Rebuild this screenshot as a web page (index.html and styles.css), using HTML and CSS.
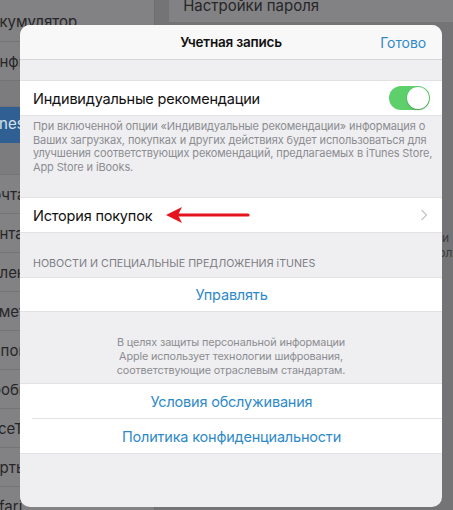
FILE: index.html
```html
<!DOCTYPE html>
<html lang="ru">
<head>
    <meta charset="UTF-8">
    <meta name="viewport" content="width=device-width, initial-scale=1.0">
    <title>Учетная запись</title>
    <link rel="stylesheet" href="styles.css">
</head>
<body>
    <!-- настройки под затемнением -->
    <div class="settings">
        <div class="master">
            <div class="m-row first">Аккумулятор</div>
            <div class="m-row">Конфиденциальность</div>
            <div class="m-gap"></div>
            <div class="m-row selected">iTunes Store и App Store</div>
            <div class="m-gap small"></div>
            <div class="m-row">Почта</div>
            <div class="m-row">Контакты</div>
            <div class="m-row">Календарь</div>
            <div class="m-row">Заметки</div>
            <div class="m-row">Напоминания</div>
            <div class="m-row">Сообщения</div>
            <div class="m-row">FaceTime</div>
            <div class="m-row">Карты</div>
            <div class="m-row">Safari</div>
        </div>
        <div class="detail">
            <div class="d-cell">Настройки пароля</div>
            <div class="d-note">(если<br>пароль</div>
        </div>
    </div>

    <div class="modal">
        <div class="nav">
            <span></span>
            <div class="nav-title">Учетная запись</div>
            <div class="nav-done">Готово</div>
        </div>

        <div class="group top">
            <div class="cell">
                <span>Индивидуальные рекомендации</span>
                <div class="switch"><div class="knob"></div></div>
            </div>
        </div>
        <p class="note">При включенной опции «Индивидуальные рекомендации» информация о<br>Ваших загрузках, покупках и других действиях будет использоваться для<br>улучшения соответствующих рекомендаций, предлагаемых в iTunes Store,<br>App Store и iBooks.</p>

        <div class="group">
            <div class="cell">
                <span>История покупок</span>
                <svg class="arrow" width="90" height="22" viewBox="0 0 90 22">
                    <path d="M84 11 L14 11" stroke="#e3141c" stroke-width="3.2" stroke-linecap="round"/>
                    <path d="M2 11 L18 3 L14 11 L18 19 Z" fill="#e3141c"/>
                </svg>
                <svg class="chevron" width="8" height="12" viewBox="0 0 8 12">
                    <path d="M1.5 1 L6.5 6 L1.5 11" fill="none" stroke="#c7c7cc" stroke-width="1.3"/>
                </svg>
            </div>
        </div>

        <div class="section-title">НОВОСТИ И СПЕЦИАЛЬНЫЕ ПРЕДЛОЖЕНИЯ iTUNES</div>
        <div class="group">
            <div class="cell link">Управлять</div>
        </div>

        <p class="note center">В целях защиты персональной информации<br>Apple использует технологии шифрования,<br>соответствующие отраслевым стандартам.</p>

        <div class="group legal">
            <div class="cell link">Условия обслуживания</div>
            <div class="cell link">Политика конфиденциальности</div>
        </div>
    </div>
</body>
</html>
```

FILE: styles.css
```css
* {
    margin: 0;
    padding: 0;
    box-sizing: border-box;
}

body {
    width: 453px;
    height: 510px;
    overflow: hidden;
    position: relative;
    font-family: Inter, "Noto Sans", sans-serif;
    background: #747476;
}

/* фон: экран настроек */
.settings {
    display: flex;
    height: 100%;
}

.master {
    width: 182px;
    background: #828284;
    border-right: 1px solid #6e6e70;
}

.m-row {
    height: 39px;
    line-height: 39px;
    font-size: 15px;
    color: #262628;
    white-space: nowrap;
    text-indent: -19px;
    border-bottom: 1px solid #747476;
}

.m-row.first {
    height: 42px;
    line-height: 44px;
}

.m-row.selected {
    background: #2f5f93;
    color: #d6e2ee;
    height: 36px;
    line-height: 34px;
    text-indent: -22px;
    border: none;
}

.m-gap {
    height: 26px;
    background: #7c7c7e;
    border-bottom: 1px solid #747476;
}

.m-gap.small {
    height: 32px;
}

.detail {
    flex: 1;
    padding: 0 0 0 14px;
}

.d-cell {
    height: 22px;
    background: #828284;
    padding-left: 14px;
    font-size: 15px;
    line-height: 12px;
    color: #262628;
}

.d-note {
    margin-top: 208px;
    padding-left: 248px;
    font-size: 12px;
    line-height: 15px;
    color: #3a3a3c;
    white-space: nowrap;
}

/* окно учетной записи */
.modal {
    position: absolute;
    left: 20px;
    top: 25px;
    width: 422px;
    height: 482px;
    border-radius: 10px;
    overflow: hidden;
    background: #efeff2;
    display: flex;
    flex-direction: column;
}

.nav {
    height: 35px;
    flex-shrink: 0;
    background: #f8f8f8;
    border-bottom: 1px solid #d6d6d8;
    display: grid;
    grid-template-columns: 1fr auto 1fr;
    align-items: center;
    padding: 0 16px;
}

.nav-title {
    font-size: 13.5px;
    font-weight: 600;
    letter-spacing: -0.2px;
    color: #111;
}

.nav-done {
    justify-self: end;
    font-size: 14px;
    letter-spacing: -0.1px;
    color: #2f8ac8;
}

.group {
    background: #fff;
    border-top: 1px solid #e2e2e4;
    border-bottom: 1px solid #e2e2e4;
}

.group.top {
    margin-top: 20px;
}

.cell {
    height: 34px;
    display: flex;
    align-items: center;
    padding: 0 12px 0 13px;
    font-size: 14.5px;
    letter-spacing: -0.2px;
    color: #111;
    position: relative;
}

.cell + .cell::before {
    content: "";
    position: absolute;
    left: 12px;
    right: 0;
    top: -1px;
    border-top: 1px solid #e2e2e4;
}

.cell + .cell {
    margin-top: 1px;
}

.cell.link {
    justify-content: center;
    color: #2f8ac8;
    height: 33px;
}

.legal .cell.link {
    height: 34px;
}

.switch {
    margin-left: auto;
    width: 41px;
    height: 24px;
    border-radius: 12px;
    background: #5dd06b;
    padding: 1px;
    display: flex;
    justify-content: flex-end;
}

.knob {
    width: 22px;
    height: 22px;
    border-radius: 50%;
    background: #fff;
    box-shadow: 0 1px 2px rgba(0,0,0,0.25);
}

.arrow {
    margin-left: 12px;
    margin-top: -1px;
}

.chevron {
    margin-left: auto;
    margin-right: 2px;
}

.note {
    font-size: 11px;
    line-height: 13.6px;
    letter-spacing: -0.12px;
    color: #8c8c90;
    padding: 4px 13px 23px;
    white-space: nowrap;
}

.note.center {
    text-align: center;
    font-size: 10.8px;
    padding: 24px 13px 6px;
}

.section-title {
    font-size: 10.7px;
    color: #7d7d82;
    padding: 24px 13px 7px;
}
```
